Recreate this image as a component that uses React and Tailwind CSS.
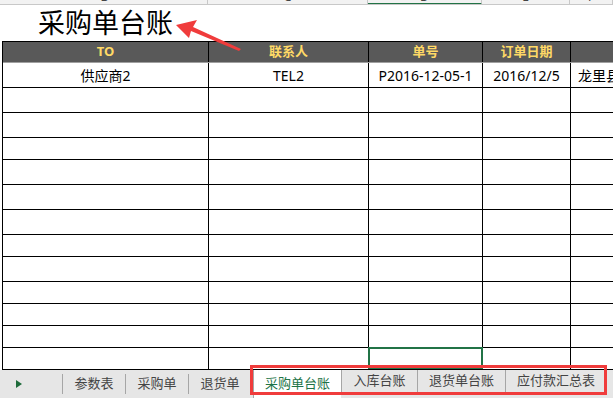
import React from 'react';

const cols = 'grid grid-cols-[206px_160px_114px_88px_1fr]';
const font = { fontFamily: '"Noto Sans", "Noto Sans CJK SC", sans-serif' };

// heights of the empty rows below the first data row
const rowHeights = [25, 25, 22, 25, 25, 25, 22, 25, 22, 22, 22, 22];

const TitleArrow = () => (
  <svg className="absolute left-0 top-0 pointer-events-none" width="260" height="60">
    <path d="M176 25 L197 20 L193 27 L241 49 L239 51 L191 31 L189 38 Z" fill="#f03c3c" />
  </svg>
);

const ColumnLetters = () => (
  <div className="h-[5px] bg-[#f2f2f2] border-b border-[#c8c8c8] overflow-hidden pl-[2px]">
    <div className={cols + ' h-[4px]'}>
      {['B', 'C', 'D', 'E', 'F'].map((c, i) => (
        <div
          key={c}
          className={
            'relative border-r border-[#c8c8c8] text-center text-[12px] leading-[12px] text-[#444] -mt-[9px] ' +
            (i === 2 ? 'border-b-2 border-b-[#217346]' : '')
          }
        >
          {c}
        </div>
      ))}
    </div>
  </div>
);

const Row = ({ h, children, last }) => (
  <div className={cols + ' border-b border-black'} style={{ height: h }}>
    {children || (
      <>
        <div className="border-r border-black" />
        <div className="border-r border-black" />
        <div className={last ? 'border-2 border-[#217346] -ml-px -mt-px' : 'border-r border-black'} />
        <div className="border-r border-black" />
        <div />
      </>
    )}
  </div>
);

const Tabs = () => (
  <div className="relative h-[28px] bg-[#e6e6e6] flex items-stretch text-[13px] text-[#444]">
    <div className="w-[62px] flex items-center pl-[16px]">
      <svg width="6" height="8" viewBox="0 0 6 8">
        <path d="M0 0 L6 4 L0 8 Z" fill="#1e6b3a" />
      </svg>
    </div>
    {['参数表', '采购单', '退货单'].map((t) => (
      <div key={t} className="w-[63px] flex items-center justify-center border-l border-[#a6a6a6] my-[4px]">
        {t}
      </div>
    ))}
    <div className="ml-[2px] w-[88px] bg-white flex items-center justify-center text-[#217346] border-l border-[#a6a6a6]">
      采购单台账
    </div>
    <div className="flex items-stretch mb-[5px] border border-t-0 border-[#a6a6a6] bg-[#e6e6e6]">
      <div className="w-[76px] flex items-center justify-center border-r border-[#a6a6a6]">入库台账</div>
      <div className="w-[88px] flex items-center justify-center border-r border-[#a6a6a6]">退货单台账</div>
      <div className="w-[100px] flex items-center justify-center">应付款汇总表</div>
    </div>
    <div className="absolute left-[250px] top-[-5px] w-[357px] h-[30px] border-[3px] border-[#f03c3c] pointer-events-none" />
  </div>
);

export default function App() {
  return (
    <div className="w-[613px] h-[398px] bg-white overflow-hidden flex flex-col relative" style={font}>
      <ColumnLetters />
      <div className="h-[36px] pl-[38px] text-[27px] leading-[36px] text-black">采购单台账</div>
      <div className="flex-1 overflow-hidden">
        <div className="ml-[2px] border-l border-black">
          <div className={cols + ' h-[22px] bg-[#595959] border-t border-black border-b border-b-[#a0a0a0] text-[13px] font-bold text-[#ffd966]'}>
            <div className="flex items-center justify-center border-r border-black">TO</div>
            <div className="flex items-center justify-center border-r border-black">联系人</div>
            <div className="flex items-center justify-center border-r border-black">单号</div>
            <div className="flex items-center justify-center border-r border-black">订单日期</div>
            <div />
          </div>
          <Row h={25}>
            <div className="flex items-center justify-center border-r border-black text-[14px]">供应商2</div>
            <div className="flex items-center justify-center border-r border-black text-[14px]">TEL2</div>
            <div className="flex items-center justify-center border-r border-black text-[14px]">P2016-12-05-1</div>
            <div className="flex items-center justify-center border-r border-black text-[14px]">2016/12/5</div>
            <div className="flex items-center pl-[7px] text-[14px] whitespace-nowrap overflow-hidden">龙里县</div>
          </Row>
          {rowHeights.map((h, i) => (
            <Row key={i} h={h} last={i === rowHeights.length - 1} />
          ))}
        </div>
      </div>
      <Tabs />
      <TitleArrow />
    </div>
  );
}
